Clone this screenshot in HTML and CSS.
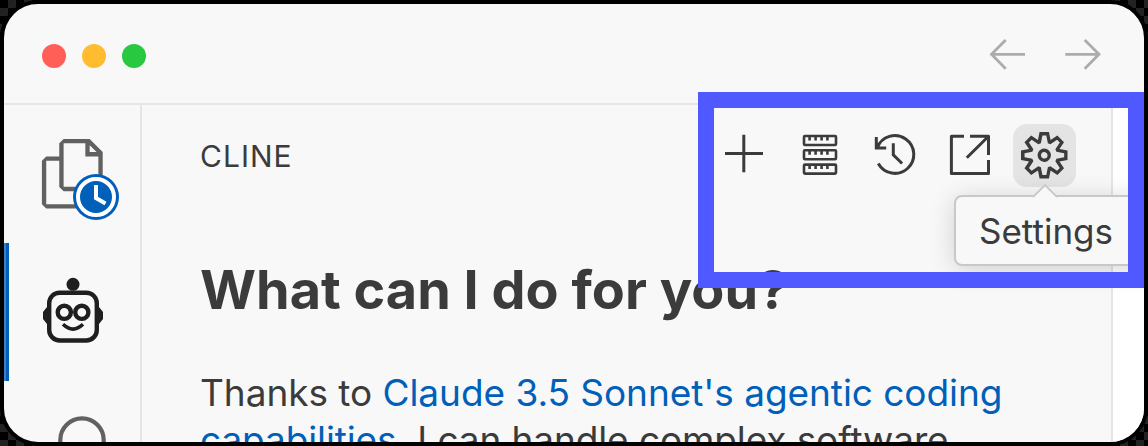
FILE: index.html
```html
<!DOCTYPE html>
<html lang="en">
<head>
<meta charset="utf-8">
<title>Cline</title>
<link rel="stylesheet" href="styles.css">
</head>
<body>
<div class="window">
  <header class="titlebar">
    <div class="lights"><span class="light red"></span><span class="light yellow"></span><span class="light green"></span></div>
    <svg class="nav" viewBox="988 34 116 42" fill="none"><path d="M1025 54.3H992M1005.7 40L991.5 54.3L1005.7 68.7M1065.3 54.3H1099M1084.7 40L1099 54.3L1084.7 68.7"/></svg>
  </header>
  <div class="body">
    <nav class="activity">
      <div class="item files">
        <svg class="files-icon" viewBox="0 0 24 24"><path d="M17.5 0h-9L7 1.5V6H2.5L1 7.5v15.07L2.5 24h12.07L16 22.57V18h4.7l1.3-1.43V4.5L17.5 0zm0 2.12l2.38 2.38H17.5V2.12zm-3 20.38h-12v-15H7v9.07L8.5 18h6v4.5zm6-6h-12v-15H16V6h4.5v10.5z"/></svg>
        <svg class="badge" viewBox="0 0 46 46"><circle class="blue" cx="23" cy="23" r="23"/><circle class="ring" cx="23" cy="23" r="18"/><path class="hands" d="M23 11v13l9.5 5.5"/></svg>
      </div>
      <div class="item active">
        <svg class="robot" viewBox="39 274 68 72" fill="none"><circle class="solid" cx="73" cy="284.3" r="6.5"/><path class="solid" d="M49 307h-2l-4 5v7l4 5h2zM97 307h2l4 5v7l-4 5h-2z"/><rect x="49.2" y="292.7" width="47.6" height="47.8" rx="10.5"/><circle cx="64.3" cy="312.3" r="6.6"/><circle cx="81.8" cy="312.3" r="6.6"/><path class="smile" d="M63 324.3q10 9.500 20 0"/></svg>
      </div>
      <div class="item search">
        <svg class="search-icon" viewBox="0 0 48 48" fill="none"><circle cx="24" cy="24" r="21.7"/></svg>
      </div>
    </nav>
    <main class="panel">
      <div class="panel-head">
        <span class="name">CLINE</span>
        <div class="actions">
          <button class="action"><svg viewBox="713 124 63 63"><path class="line" d="M725 153.500h38M743.800 134.700v37.600"/></svg></button>
          <button class="action"><svg viewBox="788 124 63 63"><g class="server"><rect x="804" y="136" width="32" height="9" rx="1"/><rect x="804" y="150.300" width="32" height="9" rx="1"/><rect x="804" y="164.600" width="32" height="9" rx="1"/><path d="M809.600 136v4.500m6 -4.500v4.500m6 -4.500v4.500m5.800 -4.500v4.500M809.600 150.300v4.500m6 -4.500v4.500m6 -4.500v4.500m5.800 -4.500v4.500M809.600 164.600v4.500m6 -4.500v4.500m6 -4.500v4.500m5.800 -4.500v4.500"/></g></svg></button>
          <button class="action"><svg viewBox="863 124 63 63"><path class="line" d="M878.300 163.500A18.900 18.900 0 1 0 877.300 147.500M876.300 137v10.900H886.200M893.300 143.300v11.500l8.800 8.700"/></svg></button>
          <button class="action"><svg viewBox="938 124 63 63"><path class="line join" d="M964 136.300H951.400V173.500H988.500V160M970 136.300H988.500V155M966.800 157.700L988 136.800"/></svg></button>
          <button class="action selected"><svg class="gear" viewBox="0 0 24 24"><path d="M19.85 8.75l4.15.83v4.84l-4.15.83 2.35 3.52-3.43 3.43-3.52-2.35-.83 4.15H9.58l-.83-4.15-3.52 2.35-3.43-3.43 2.35-3.52L0 14.42V9.58l4.15-.83L1.8 5.23 5.23 1.8l3.52 2.35L9.58 0h4.84l.83 4.15 3.52-2.35 3.43 3.43-2.35 3.52zm-1.57 5.07l4-.81v-2l-4-.81-.54-1.3 2.29-3.43-1.43-1.43-3.43 2.29-1.3-.54-.81-4h-2l-.81 4-1.3.54-3.43-2.29-1.43 1.43L6.38 8.9l-.54 1.3-4 .81v2l4 .81.54 1.3-2.29 3.43 1.43 1.43 3.43-2.29 1.3.54.81 4h2l.81-4 1.3-.54 3.43 2.29 1.43-1.43-2.29-3.43.54-1.3zm-8.186-4.672A3.43 3.43 0 0 1 12 8.57 3.44 3.44 0 0 1 15.43 12a3.43 3.43 0 1 1-5.336-2.852zm.956 4.274c.281.188.612.288.95.288A1.7 1.7 0 0 0 13.71 12a1.71 1.71 0 1 0-2.66 1.422z"/></svg></button>
        </div>
      </div>
      <h1 class="title">What can I do for you?</h1>
      <p class="intro"><span class="row"><span class="lead">Thanks to </span><a class="link">Claude 3.5 Sonnet's agentic coding</a></span><span class="row second"><a class="link">capabilities,</a> I can handle complex software</span></p>
    </main>
    <aside class="editor"></aside>
  </div>
  <div class="tooltip"><svg class="pointer" viewBox="0 0 24 14"><path d="M0 13L12 1L24 13" /></svg>Settings</div>
  <div class="highlight"></div>
</div>
</body>
</html>
```
FILE: styles.css
```css
* { box-sizing: border-box; }
body {
  margin: 0;
  overflow: hidden;
  background: repeating-conic-gradient(#222 0 25%, #000 0 50%) 0 0 / 16px 16px;
  font-family: Inter, "Liberation Sans", sans-serif;
  color: #3b3b3b;
}
svg { display: block; flex: none; }
.window {
  position: relative;
  width: 1148px;
  height: 446px;
  border: 4px solid #000;
  border-radius: 38px;
  background: #f8f8f8;
  overflow: hidden;
  display: flex;
  flex-direction: column;
}
.titlebar {
  height: 101px;
  flex: none;
  border-bottom: 2px solid #e5e5e5;
  display: flex;
  justify-content: space-between;
  align-items: flex-start;
  padding: 30px 40px 0 38px;
}
.lights { display: flex; gap: 16px; padding-top: 10px; }
.light { width: 24px; height: 24px; border-radius: 50%; }
.red { background: #ff5f57; }
.yellow { background: #febc2e; }
.green { background: #28c840; }
.nav { width: 116px; height: 42px; stroke: #acacac; stroke-width: 2.8; }
.body { flex: 1; display: flex; min-height: 0; }
.activity { width: 138px; flex: none; border-right: 2px solid #e5e5e5; }
.item { height: 138px; }
.files { position: relative; padding: 34px 0 0 34.500px; }
.files-icon { width: 69.500px; height: 69.500px; fill: #616161; }
.badge { position: absolute; left: 69px; top: 69px; width: 46px; height: 46px; }
.blue { fill: #005fb8; }
.ring { fill: none; stroke: #fff; stroke-width: 4; }
.hands { fill: none; stroke: #fff; stroke-width: 4; }
.active {
  border-left: 2px solid #3f7fc8;
  box-shadow: inset 3px 0 #005fb8;
  padding: 31px 0 0 33px;
}
.robot { width: 68px; height: 72px; stroke: #1f1f1f; stroke-width: 4.400; }
.solid { fill: #1f1f1f; stroke: none; }
.smile { stroke-width: 3.600; }
.search { padding: 35px 0 0 54px; }
.search-icon { width: 48px; height: 48px; stroke: #616161; stroke-width: 4.200; }
.panel { width: 971px; flex: none; border-right: 2px solid #e5e5e5; padding: 19px 35px 0 58px; white-space: nowrap; }
.panel-head { display: flex; justify-content: space-between; align-items: center; height: 63px; }
.name { font-size: 30px; letter-spacing: 1px; }
.actions { display: flex; gap: 12px; }
.action {
  width: 63px;
  height: 63px;
  padding: 0;
  border: 0;
  border-radius: 14px;
  background: none;
  display: flex;
  align-items: center;
  justify-content: center;
}
.action svg { width: 63px; height: 63px; }
.selected { background: #e4e4e4; }
.action .gear { width: 46.500px; height: 46.500px; fill: #3b3b3b; }
.line { fill: none; stroke: #3b3b3b; stroke-width: 3; }
.join { stroke-linejoin: round; }
.server { fill: none; stroke: #3b3b3b; stroke-width: 2.600; }
.title { margin: 70px 0 0; font-size: 54px; line-height: 66px; font-weight: 700; letter-spacing: 0; }
.intro { margin: 46px 0 0; font-size: 37px; line-height: 47px; letter-spacing: -.05px; }
.row { display: block; }
.second { letter-spacing: -.11px; }
.lead { white-space: pre; }
.link { color: #005fb8; }
.editor { flex: 1; background: #fff; }
.tooltip {
  position: absolute;
  left: 950px;
  top: 191px;
  width: 200px;
  height: 71px;
  border: 2px solid #c8c8c8;
  border-radius: 8px;
  background: #f8f8f8;
  box-shadow: 0 4px 26px rgba(0, 0, 0, .16);
  padding-left: 23px;
  font-size: 35px;
  line-height: 68px;
}
.pointer { position: absolute; left: 77px; top: -13px; width: 24px; height: 14px; fill: #f8f8f8; stroke: #c8c8c8; stroke-width: 1.800; }
.highlight { position: absolute; left: 694px; top: 88px; width: 446px; height: 196px; border: 16px solid #5058ff; }
```
